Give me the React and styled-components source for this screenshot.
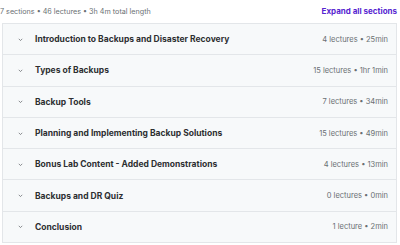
import styled, { createGlobalStyle } from "styled-components";

const GlobalStyle = createGlobalStyle`
  body {
    margin: 0;
    background: #fff;
    font-family: "Inter", "Liberation Sans", sans-serif;
  }
`

const sections = [
  { title: "Introduction to Backups and Disaster Recovery", meta: "4 lectures • 25min" },
  { title: "Types of Backups", meta: "15 lectures • 1hr 1min" },
  { title: "Backup Tools", meta: "7 lectures • 34min" },
  { title: "Planning and Implementing Backup Solutions", meta: "15 lectures • 49min" },
  { title: "Bonus Lab Content - Added Demonstrations", meta: "4 lectures • 13min" },
  { title: "Backups and DR Quiz", meta: "0 lectures • 0min" },
  { title: "Conclusion", meta: "1 lecture • 2min" },
]

const Wrapper = styled.div`
  width: 400px;
  height: 245px;
  padding: 0 3px 0 2px;
  box-sizing: border-box;
`

const Header = styled.div`
  display: flex;
  justify-content: space-between;
  align-items: center;
  height: 23px;
  padding-bottom: 1px;
  box-sizing: border-box;
`

const Summary = styled.span`
  font-size: 7.2px;
  color: #6a6f73;
  margin-left: -2px;
`

const ExpandButton = styled.button`
  background: none;
  border: none;
  padding: 0;
  font-family: inherit;
  font-size: 8px;
  font-weight: 700;
  color: #5624d0;
  cursor: pointer;
`

const Accordion = styled.div`
  border: 1px solid #e3e6e9;
`

const Row = styled.div`
  display: flex;
  align-items: center;
  height: 30.3px;
  padding: 0 8px 0 14px;
  background: #f7f9fa;
  border-top: ${p => (p.first ? "none" : "1px solid #e3e6e9")};
`

const Chevron = styled.svg`
  width: 7px;
  height: 7px;
  margin-right: 11px;
  flex-shrink: 0;
`

const Title = styled.span`
  flex: 1;
  font-size: 8.5px;
  font-weight: 700;
  color: #2d2f31;
`

const Meta = styled.span`
  font-size: 7.5px;
  color: #6a6f73;
`

export default function App() {
  return (
    <Wrapper>
      <GlobalStyle />
      <Header>
        <Summary>7 sections • 46 lectures • 3h 4m total length</Summary>
        <ExpandButton>Expand all sections</ExpandButton>
      </Header>
      <Accordion>
        {sections.map((s, i) => (
          <Row key={s.title} first={i === 0}>
            <Chevron viewBox="0 0 10 10">
              <path d="M2.5 4 L5 6.5 L7.5 4" fill="none" stroke="#5a5f63" strokeWidth="1" />
            </Chevron>
            <Title>{s.title}</Title>
            <Meta>{s.meta}</Meta>
          </Row>
        ))}
      </Accordion>
    </Wrapper>
  )
}
